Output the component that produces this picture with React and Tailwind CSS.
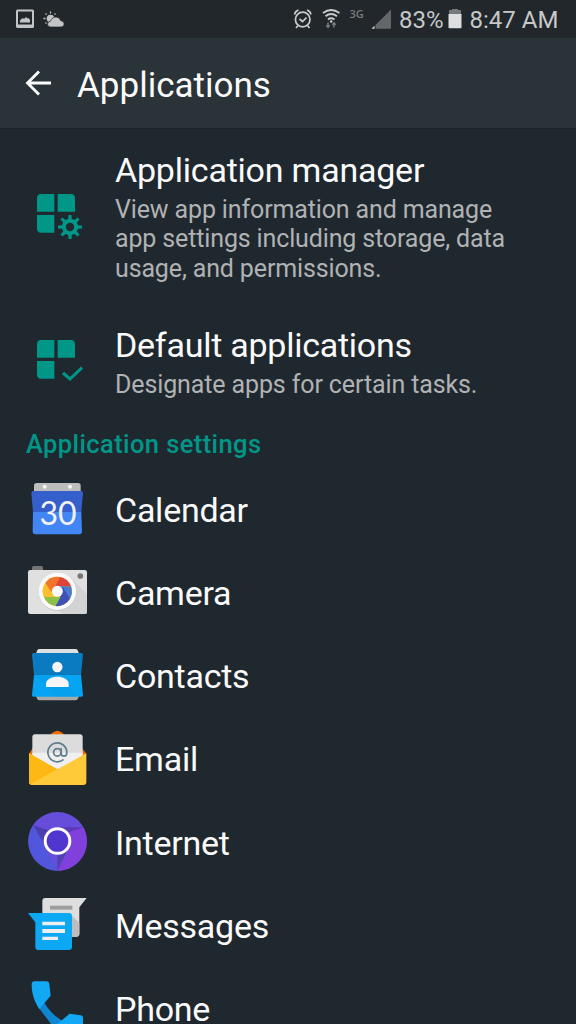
import React from 'react';
import { AtSign } from 'lucide-react';

const CalendarIcon = () => (
  <svg viewBox="15 9 192 192" className="size-16 shrink-0">
    <path d="M42 58V32q0-8 8-8h124q8 0 8 8v26z" fill="#bdbdbd" />
    <circle cx="74" cy="35" r="6" fill="#f5f5f5" />
    <circle cx="150" cy="35" r="6" fill="#f5f5f5" />
    <path d="M34 54q0-6 6-6h143q6 0 6 6l-5 57H39z" fill="#3560cc" />
    <path d="M39 111h145l2 58q0 9-8 9H46q-8 0-8-9z" fill="#4285f4" />
    <text x="114" y="151" textAnchor="middle" fontSize="96" fill="#f2f2f2" className="font-[Lato,sans-serif]">30</text>
  </svg>
);

const CameraIcon = () => (
  <svg viewBox="15 18 192 192" className="size-16 shrink-0">
    <path d="M36 50V38q0-5 5-5h23q5 0 5 5v12z" fill="#757575" />
    <rect x="24" y="45" width="177" height="132" rx="7" fill="#e0e0e0" />
    <path d="M153 69l48 48v53q0 7-7 7h-62l-45-23z" fill="#d3d3d3" />
    <circle cx="181" cy="63" r="8.500" fill="#757575" />
    <circle cx="112" cy="111" r="56" fill="#c4c4c4" />
    <circle cx="112" cy="109" r="56" fill="#fafafa" />
    <g transform="translate(112 109)">
      <circle r="44" fill="#fbc02d" />
      <path d="M-36-25A44 44 0 0 1 8-43L-4-15-20 6z" fill="#f4742b" />
      <path d="M8-43A44 44 0 0 1 41-15H-6z" fill="#db4437" />
      <path d="M4-15H41A44 44 0 0 1 38 22L14 8z" fill="#4a7bd0" />
      <path d="M16-14L38 22A44 44 0 0 1-6 44L8 14z" fill="#3f51b5" />
      <path d="M-40 17H10L-6 44A44 44 0 0 1-40 17z" fill="#8bc34a" />
      <path d="M-36-25L-8 17H-40A44 44 0 0 1-36-25z" fill="#fbc02d" />
      <circle r="16.500" fill="#fafafa" />
    </g>
  </svg>
);

const ContactsIcon = () => (
  <svg viewBox="15 12 192 192" className="size-16 shrink-0">
    <path d="M46 45l6-14q2-4 6-4h108q5 0 7 4l6 14z" fill="#e0e0e0" />
    <path d="M46 165l6 12q2 4 6 4h108q5 0 7-4l6-12z" fill="#a9a9a9" />
    <path d="M36 44q0-5 5-5h143q5 0 5 5l-6 60H42z" fill="#0a7bc1" />
    <path d="M42 104h141l6 61q0 5-5 5H41q-5 0-5-5z" fill="#06a5f4" />
    <path d="M78 140l-34-36h60l44 34 20 32h-60z" fill="#0399e6" opacity=".3" />
    <circle cx="112" cy="81" r="15.500" fill="#f5f5f5" />
    <path d="M78 141v-10c0-13 17-21 34-21s34 8 34 21v10z" fill="#f5f5f5" />
  </svg>
);

const EmailIcon = () => (
  <svg viewBox="15 12 192 192" className="size-16 shrink-0">
    <path d="M27 92l11-16 62-48q12-9 24 0l62 48 13 16-10 20H40z" fill="#ef6c00" />
    <path d="M37 43q0-9 8-9h135q8 0 8 9v95H37z" fill="#dcdcdc" />
    <path d="M37 89h151v49H37z" fill="#efefef" />
    <AtSign x="78" y="54" width="68" height="68" strokeWidth={1.8} color="#607d8b" />
    <path d="M27 91l85 48 87-48v86q0 9-9 9H36q-9 0-9-9z" fill="#ffca3a" />
    <path d="M27 91l85 48-81 45q-4-2-4-8z" fill="#fdb813" />
  </svg>
);

const InternetIcon = () => (
  <svg viewBox="15 24 192 192" className="size-16 shrink-0">
    <circle cx="112.500" cy="115" r="88" fill="#664edb" />
    <path d="M40 67L78 136l34 67A88 88 0 0 1 40 67z" fill="#5057dc" />
    <path d="M112 73h78a88 88 0 0 1-78 130l40-72z" fill="#813fdc" />
    <path d="M40 67l46 15-13 44z" fill="#4c3eae" />
    <path d="M110 73h80l-48 16z" fill="#5b39b8" />
    <path d="M112 203v-52l30-8z" fill="#5042b5" />
    <circle cx="112.500" cy="114" r="37" fill="#5035ce" stroke="#fff" strokeWidth="9" />
  </svg>
);

const MessagesIcon = () => (
  <svg viewBox="15 12 192 192" className="size-16 shrink-0">
    <path d="M67 33q0-9 9-9h124l-22 28v79q0 9-9 9H67z" fill="#dedede" />
    <path d="M155 76l23 23v32q0 9-9 9h-14z" fill="#bdbdbd" />
    <rect x="90" y="47" width="67" height="12" fill="#9e9e9e" />
    <path d="M24 69h123q9 0 9 9v93q0 9-9 9H55q-9 0-9-9V97z" fill="#0da8f4" />
    <path d="M67 95h68v11H67zM67 117h68v12H67zM67 140h47v10H67z" fill="#eee" />
  </svg>
);

const PhoneIcon = () => (
  <svg viewBox="15 261 192 192" className="size-16 shrink-0">
    <path d="M55 352l18-14c14 24 32 42 54 54l-12 38z" fill="#0d87d1" />
    <path d="M35 283q0-9 9-9h35q8 0 9 9l4 34-34 40c-16-23-23-49-23-74z" fill="#12a8f3" />
    <path d="M112 402l37-31 33 5q7 1 7 8v38q0 8-8 8c-31 0-58-10-81-28z" fill="#12a8f3" />
  </svg>
);

const AppGrid = ({ children }) => (
  <svg viewBox="51 42 144 144" className="mr-[30px] ml-[37px] size-12 shrink-0" fill="#009688">
    <path d="M51 95V54q1-11 11-12h41v53zM113 42h41q10 1 11 12v41h-52zM51 105h52v53H62q-10-1-11-12z" />
    {children}
  </svg>
);

const apps = [
  { name: 'Calendar', Icon: CalendarIcon },
  { name: 'Camera', Icon: CameraIcon },
  { name: 'Contacts', Icon: ContactsIcon },
  { name: 'Email', Icon: EmailIcon },
  { name: 'Internet', Icon: InternetIcon },
  { name: 'Messages', Icon: MessagesIcon },
  { name: 'Phone', Icon: PhoneIcon },
];

const teeth = [0, 45, 90, 135, 180, 225, 270, 315];

const StatusBar = () => (
  <div className="flex h-[38px] shrink-0 items-center bg-[#22272b] text-2xl text-[#c6c8c9]">
    <svg viewBox="0 0 70 38" className="h-[38px] w-[70px]" fill="#c3c4c5">
      <path fillRule="evenodd" d="M17.500 9.500h15q1.500 0 1.500 1.500v15.500q0 1.500-1.500 1.500h-15q-1.500 0-1.500-1.500V11q0-1.500 1.500-1.500zm.5 2v13h14v-13z" />
      <path d="M20 22.500v-2l2.500-2.500 1.500 1 2-2 1.500 1.500 1-.5 1.500 2v2.500z" />
      <circle cx="50.500" cy="18.500" r="3.800" />
      <path d="M50.500 11.500v2M45.500 13.500l1 1M43.500 18.500h2M45.500 23.500l1-1M55.500 13.500l-1 1" stroke="#c3c4c5" strokeWidth="1.300" />
      <path d="M51 27q-3.500 0-3.500-2.800 0-2.700 3-3 1.500-4.200 5.500-4.200 3.500 0 4.700 3.700 3.500.3 3.500 3.300 0 3-3.500 3z" stroke="#22272b" strokeWidth=".7" />
    </svg>
    <svg viewBox="290 0 106 38" className="ml-[220px] h-[38px] w-[106px] shrink-0" fill="none">
      <g stroke="#c8cacb" strokeWidth="1.700">
        <circle cx="302.700" cy="19.500" r="7.300" />
        <path d="M294.500 14.500q.8-3.500 4-4.500M311 14.500q-.8-3.500-4-4.500M298 25.500l-2 2.500M307.500 25.500l2 2.500M299.500 19l3 2.500 4-3.800" />
      </g>
      <g stroke="#c8cacb" strokeWidth="1.900">
        <path d="M323 13q8-6 16.500 0M325.500 16.300q5.500-4.500 11.500 0M328 19.500q3-2.500 6.500 0" />
      </g>
      <circle cx="331.200" cy="21.500" r="1.300" fill="#c8cacb" />
      <path d="M328 22.500v4.500M326.300 25.300l1.700 2 1.700-2M334 27.500V23M332.300 24.800l1.700-2 1.700 2" stroke="#777b7d" strokeWidth="1.500" />
      <text x="349.500" y="18" fontSize="11" fill="#777b7d" className="font-[Open_Sans,sans-serif] font-semibold">3G</text>
      <path d="M375.500 28.800V25L391 9.500v19.300z" fill="#63676a" />
      <path d="M371.500 28.800l3-3v3z" fill="#dadada" />
    </svg>
    <span className="ml-[3px] w-[46px] pt-[2px] whitespace-nowrap">83%</span>
    <svg viewBox="0 0 14 20" className="ml-[3px] h-5 w-3.5 shrink-0">
      <path d="M1 1h3V0h6v1h3v5H1z" fill="#777a7c" />
      <path d="M.5 5h13v13.500q0 .8-.8.8H1.300q-.8 0-.8-.8z" fill="#dddedf" />
    </svg>
    <span className="ml-[7.500px] pt-[2px] whitespace-nowrap">8:47 AM</span>
  </div>
);

const App = () => {
  return (
    <div className="flex h-[1024px] w-[576px] flex-col overflow-hidden bg-[#20282f] font-[Roboto,sans-serif] text-[#fafafa]">
      <StatusBar />
      <header className="flex h-[91px] shrink-0 items-center border-b border-[#1b2329] bg-[#293338] pl-[25px]">
        <svg viewBox="0 0 28 28" className="size-7" fill="none" stroke="#fff" strokeWidth="2.800">
          <path d="M14 2.500L2.500 14 14 25.500M3 14h23" />
        </svg>
        <h1 className="ml-6 pt-[5px] text-[35px] leading-[52px]">Applications</h1>
      </header>

      <section className="flex h-[169px] shrink-0 pt-[65px]">
        <AppGrid>
          <circle cx="150" cy="141" r="18.500" fill="none" stroke="#009688" strokeWidth="12" />
          {teeth.map((angle) => (
            <path key={angle} d="M144.500 121l1-16h9l1 16z" transform={`rotate(${angle} 150 141)`} />
          ))}
        </AppGrid>
        <div className="-mt-[44px] whitespace-nowrap">
          <h2 className="text-[34px] leading-[40px] tracking-[-0.22px]">Application manager</h2>
          <p className="mt-[5px] text-[25px] leading-[29.300px] tracking-[-0.140px] text-[#b0b2b3]">
            View app information and manage<br />
            app settings including storage, data<br />
            usage, and permissions.
          </p>
        </div>
      </section>

      <section className="flex h-[122px] shrink-0 pt-[42px]">
        <AppGrid>
          <path d="M129 141l21 18 36-34" fill="none" stroke="#009688" strokeWidth="9" />
        </AppGrid>
        <div className="-mt-[15px] whitespace-nowrap">
          <h2 className="text-[34px] leading-[40px] tracking-[-0.25px]">Default applications</h2>
          <p className="mt-[5px] text-[25px] leading-[29.300px] tracking-[-0.120px] text-[#b0b2b3]">Designate apps for certain tasks.</p>
        </div>
      </section>

      <h3 className="h-12 shrink-0 pt-[9px] pl-[26px] text-[25.500px] leading-[30px] font-medium tracking-[0.4px] text-[#009688]">
        Application settings
      </h3>

      <ul>
        {apps.map(({ name, Icon }) => (
          <li key={name} className="flex h-[83.250px] items-center pl-[25px]">
            <Icon />
            <span className="ml-[26px] text-[34px] leading-none tracking-[-0.25px]">{name}</span>
          </li>
        ))}
      </ul>
    </div>
  );
};

export default App;
